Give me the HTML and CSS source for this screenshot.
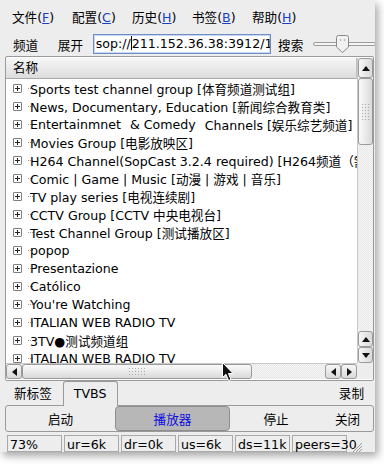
FILE: index.html
```html
<html>
<head>
    <title>SopCast</title>
    <link rel="stylesheet" href="styles.css">
</head>
<body>
    <div id="win">
        <div id="menuBar">
            <span class="menuItem">文件(<u>F</u>)</span>
            <span class="menuItem">配置(<u>C</u>)</span>
            <span class="menuItem">历史(<u>H</u>)</span>
            <span class="menuItem">书签(<u>B</u>)</span>
            <span class="menuItem">帮助(<u>H</u>)</span>
        </div>

        <div id="toolBar">
            <span class="toolBtn">频道</span>
            <span class="toolBtn">展开</span>
            <div id="urlBox">sop://<i class="caret"></i>211.152.36.38:3912/1</div>
            <span class="toolBtn">搜索</span>
            <div id="slider">
                <svg width="62" height="20" viewBox="0 0 62 20">
                    <rect x="0.5" y="8.5" width="62" height="3" rx="1.5" fill="#f4f4f4" stroke="#9c9c9c"/>
                    <path d="M23.5 3.5 Q23.5 1.5 25.5 1.5 L33.5 1.5 Q35.5 1.5 35.5 3.5 L35.5 13 L29.5 18.5 L23.5 13 Z" fill="#f2f2f2" stroke="#8a8a8a"/>
                    <circle cx="27.5" cy="6" r="0.8" fill="#999"/>
                    <circle cx="31.5" cy="6" r="0.8" fill="#999"/>
                </svg>
            </div>
        </div>

        <div id="treeFrame">
            <div id="treeMain">
                <div id="treeHeader">名称</div>
                <div id="treeRows">
                    <div class="row"><i class="exp"></i>Sports test channel group [体育频道测试组]</div>
                    <div class="row"><i class="exp"></i>News, Documentary, Education [新闻综合教育类]</div>
                    <div class="row"><i class="exp"></i>Entertainmnet<span class="gap"></span>&amp; Comedy<span class="gap"></span>Channels [娱乐综艺频道]</div>
                    <div class="row"><i class="exp"></i>Movies Group [电影放映区]</div>
                    <div class="row"><i class="exp"></i>H264 Channel(SopCast 3.2.4 required) [H264频道（需要3.2.4版本）]</div>
                    <div class="row"><i class="exp"></i>Comic | Game | Music [动漫 | 游戏 | 音乐]</div>
                    <div class="row"><i class="exp"></i>TV play series [电视连续剧]</div>
                    <div class="row"><i class="exp"></i>CCTV Group [CCTV 中央电视台]</div>
                    <div class="row"><i class="exp"></i>Test Channel Group [测试播放区]</div>
                    <div class="row"><i class="exp"></i>popop</div>
                    <div class="row"><i class="exp"></i>Presentazione</div>
                    <div class="row"><i class="exp"></i>Católico</div>
                    <div class="row"><i class="exp"></i>You're Watching</div>
                    <div class="row"><i class="exp"></i>ITALIAN WEB RADIO TV</div>
                    <div class="row"><i class="exp"></i>3TV●测试频道组</div>
                    <div class="row"><i class="exp"></i>ITALIAN WEB RADIO TV</div>
                </div>
            </div>
            <div id="vScroll">
                <div class="sBtn"><i class="arr up"></i></div>
                <div class="vThumb"><i class="grip vgrip"></i></div>
                <div class="trough"></div>
                <div class="sBtn small"><i class="arr up"></i></div>
                <div class="sBtn small"><i class="arr down"></i></div>
            </div>
            <div id="hScroll">
                <div class="hBtn"><i class="arr left"></i></div>
                <div class="hThumb"><i class="grip hgrip"></i></div>
                <div class="trough"></div>
                <div class="hBtn"><i class="arr left"></i></div>
                <div class="hBtn"><i class="arr right"></i></div>
            </div>
            <div id="corner"></div>
        </div>

        <div id="tabBar">
            <span class="tab">新标签</span>
            <span class="tab active">TVBS</span>
            <span class="tabSpacer"></span>
            <span class="tab">录制</span>
        </div>

        <div id="panel">
            <div class="pBtn w1">启动</div>
            <div class="pBtn w2 pressed">播放器</div>
            <div class="pBtn w3">停止</div>
            <div class="pBtn w4">关闭</div>
        </div>

        <div id="statusBar">
            <span class="cell">73%</span>
            <span class="cell">ur=6k</span>
            <span class="cell">dr=0k</span>
            <span class="cell">us=6k</span>
            <span class="cell">ds=11k</span>
            <span class="cell">peers=30</span>
            <svg id="grip" width="14" height="14" viewBox="0 0 14 14">
                <path d="M13 3 L3 13 M13 6 L6 13 M13 9 L9 13 M13 12 L12 13" stroke="#9a9a9a" stroke-width="1"/>
            </svg>
        </div>

        <svg id="cursor" width="14" height="21" viewBox="0 0 14 21">
            <path d="M0.5 0.5 L0.5 15.5 L4 12.3 L6.6 18.6 L9 17.6 L6.4 11.5 L11 11.5 Z" fill="#111" stroke="#fff" stroke-width="1"/>
        </svg>
    </div>
</body>
</html>
```

FILE: styles.css
```css
body {
    margin: 0;
    background-color: #ffffff;
    font-family: "DejaVu Sans", "Noto Sans CJK SC", sans-serif;
    font-size: 12.6px;
    color: #000;
}

#win {
    position: relative;
    width: 375px;
    height: 452px;
    background-color: #ededed;
    box-shadow: 3px 4px 8px rgba(0, 0, 0, 0.35);
    overflow: hidden;
}

u {
    color: #1a3fbf;
}

#menuBar {
    display: flex;
    height: 33px;
    align-items: center;
    padding-left: 12px;
}

.menuItem {
    width: 60px;
    white-space: nowrap;
}

#toolBar {
    display: flex;
    align-items: center;
    height: 22px;
    padding-left: 13px;
}

.toolBtn {
    white-space: nowrap;
}

#toolBar .toolBtn:nth-child(1) {
    width: 45px;
}

#toolBar .toolBtn:nth-child(2) {
    width: 35px;
}

#toolBar .toolBtn:nth-child(4) {
    width: 35px;
}

#urlBox {
    width: 175px;
    height: 18px;
    line-height: 18px;
    border: 1px solid #6d8ec8;
    box-shadow: inset 0 0 0 1px #c9d8f0;
    background: #fff;
    padding-left: 2px;
    overflow: hidden;
    white-space: nowrap;
    margin-right: 7px;
}

.caret {
    display: inline-block;
    width: 1px;
    height: 14px;
    background: #000;
    vertical-align: -2px;
}

#slider {
    height: 20px;
}

#treeFrame {
    display: grid;
    grid-template-columns: 351px 16px;
    grid-template-rows: 305px 16px;
    margin: 1px 0 0 5px;
    width: 367px;
    height: 321px;
    border: 1px solid #9a9a9a;
    border-radius: 2px;
    padding: 1px 0 1px 0;
    background: #fff;
}

#treeMain {
    overflow: hidden;
    background: #fff;
}

#treeHeader {
    height: 20px;
    line-height: 20px;
    padding-left: 7px;
    background: linear-gradient(#f7f7f7, #dcdcdc);
    border-bottom: 1px solid #a8a8a8;
    border-right: 1px solid #c0c0c0;
}

.row {
    display: flex;
    align-items: center;
    height: 18px;
    white-space: nowrap;
    background-image: repeating-linear-gradient(to right, #9a9a9a 0 1px, transparent 1px 2px);
    background-size: 6px 1px;
    background-position: 22px 9px;
    background-repeat: no-repeat;
}

.gap {
    display: inline-block;
    width: 9px;
}

.exp {
    position: relative;
    flex: none;
    width: 7px;
    height: 7px;
    border: 1px solid #7d7d7d;
    border-radius: 1px;
    margin-left: 7px;
    margin-right: 8px;
    background: #fff;
}

.exp::before {
    content: "";
    position: absolute;
    left: 1px;
    top: 3px;
    width: 5px;
    height: 1px;
    background: #222;
}

.exp::after {
    content: "";
    position: absolute;
    left: 3px;
    top: 1px;
    width: 1px;
    height: 5px;
    background: #222;
}

#vScroll {
    display: flex;
    flex-direction: column;
    background: #ececec;
    border-left: 1px solid #c8c8c8;
}

.sBtn {
    display: flex;
    align-items: center;
    justify-content: center;
    height: 20px;
    flex: none;
    background: linear-gradient(to right, #f7f7f7, #d9d9d9);
    border: 1px solid #9a9a9a;
    border-radius: 3px;
    box-sizing: border-box;
}

.sBtn.small {
    height: 16px;
}

.vThumb {
    display: flex;
    align-items: center;
    justify-content: center;
    height: 67px;
    flex: none;
    background: linear-gradient(to right, #fafafa, #dadada);
    border: 1px solid #9a9a9a;
    border-radius: 3px;
    box-sizing: border-box;
}

.trough {
    flex: 1;
    background-color: #f0f0f0;
    background-image: repeating-conic-gradient(#e6e6e6 0 25%, #f7f7f7 0 50%);
    background-size: 2px 2px;
}

.grip {
    display: block;
    background-image: radial-gradient(circle, #a9a9a9 0.6px, transparent 0.8px);
    background-size: 3px 3px;
}

.vgrip {
    width: 9px;
    height: 18px;
}

.hgrip {
    width: 18px;
    height: 9px;
}

#hScroll {
    display: flex;
    background: #ececec;
    border-top: 1px solid #c8c8c8;
}

.hBtn {
    display: flex;
    align-items: center;
    justify-content: center;
    width: 16px;
    flex: none;
    background: linear-gradient(#f7f7f7, #d9d9d9);
    border: 1px solid #9a9a9a;
    border-radius: 3px;
    box-sizing: border-box;
}

.hThumb {
    display: flex;
    align-items: center;
    justify-content: center;
    width: 230px;
    flex: none;
    background: linear-gradient(#fafafa, #dadada);
    border: 1px solid #9a9a9a;
    border-radius: 3px;
    box-sizing: border-box;
}

#corner {
    background: #ededed;
}

.arr {
    display: block;
    width: 0;
    height: 0;
    border: 4px solid transparent;
}

.arr.up {
    border-bottom: 5px solid #111;
    border-top: 0;
}

.arr.down {
    border-top: 5px solid #111;
    border-bottom: 0;
}

.arr.left {
    border-right: 5px solid #111;
    border-left: 0;
}

.arr.right {
    border-left: 5px solid #111;
    border-right: 0;
}

#tabBar {
    display: flex;
    align-items: flex-end;
    height: 24px;
    margin: 0 0 0 5px;
    width: 368px;
}

.tab {
    padding: 0 9px;
    height: 22px;
    line-height: 22px;
    white-space: nowrap;
}

.tab.active {
    height: 24px;
    line-height: 24px;
    padding: 0 10px;
    margin-left: 2px;
    background: #ededed;
    border: 1px solid #9a9a9a;
    border-bottom: 0;
    border-radius: 3px 3px 0 0;
    position: relative;
    z-index: 1;
    margin-bottom: -1px;
}

.tabSpacer {
    flex: 1;
}

#panel {
    display: flex;
    margin-left: 5px;
    width: 367px;
    height: 25px;
    border: 1px solid #9a9a9a;
    border-radius: 3px;
}

.pBtn {
    display: flex;
    align-items: center;
    justify-content: center;
    height: 25px;
}

.w1 { width: 109px; }
.w2 { width: 115px; }
.w3 { width: 92px; }
.w4 { width: 51px; }

.pressed {
    background: #b7b7b7;
    border: 1px solid #8e8e8e;
    border-radius: 4px;
    box-sizing: border-box;
    color: #1010e0;
}

#statusBar {
    display: flex;
    align-items: center;
    gap: 2px;
    margin: 2px 0 0 7px;
    height: 18px;
}

.cell {
    width: 55px;
    height: 17px;
    line-height: 17px;
    border: 1px solid #aaaaaa;
    padding-left: 2px;
    box-sizing: border-box;
    white-space: nowrap;
}

.cell:last-child {
    width: 66px;
    padding-left: 1px;
}

#grip {
    margin-top: 8px;
}

#cursor {
    position: absolute;
    left: 222px;
    top: 362px;
}
```
